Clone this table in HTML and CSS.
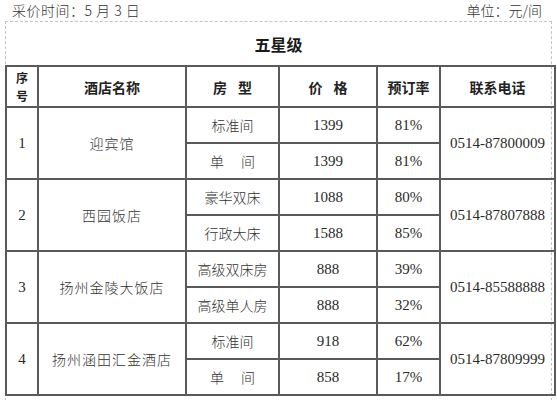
FILE: index.html
```html
<!DOCTYPE html>
<html lang="zh">
<head>
<meta charset="utf-8">
<link rel="stylesheet" href="styles.css">
</head>
<body>
<div class="topbar">
  <span class="date">采价时间：5 月 3 日</span>
  <span class="unit">单位：元/间</span>
</div>
<div class="box">
  <div class="title">五星级</div>
  <table class="grid">
    <colgroup>
      <col class="c1"><col class="c2"><col class="c3"><col class="c4"><col class="c5"><col class="c6">
    </colgroup>
    <thead>
      <tr class="head">
        <th class="idx"><span class="ch">序</span><span class="ch">号</span></th>
        <th>酒店名称</th>
        <th class="spaced">房&nbsp;型</th>
        <th class="spaced">价&nbsp;格</th>
        <th>预订率</th>
        <th>联系电话</th>
      </tr>
    </thead>
    <tbody>
      <tr class="top">
        <td rowspan="2" class="num">1</td>
        <td rowspan="2" class="name">迎宾馆</td>
        <td class="room">标准间</td>
        <td class="num">1399</td>
        <td class="num">81%</td>
        <td rowspan="2" class="num">0514-87800009</td>
      </tr>
      <tr class="sub">
        <td class="room">单　&nbsp;间</td>
        <td class="num">1399</td>
        <td class="num">81%</td>
      </tr>
      <tr class="top">
        <td rowspan="2" class="num">2</td>
        <td rowspan="2" class="name">西园饭店</td>
        <td class="room">豪华双床</td>
        <td class="num">1088</td>
        <td class="num">80%</td>
        <td rowspan="2" class="num">0514-87807888</td>
      </tr>
      <tr class="sub">
        <td class="room">行政大床</td>
        <td class="num">1588</td>
        <td class="num">85%</td>
      </tr>
      <tr class="top">
        <td rowspan="2" class="num">3</td>
        <td rowspan="2" class="name">扬州金陵大饭店</td>
        <td class="room">高级双床房</td>
        <td class="num">888</td>
        <td class="num">39%</td>
        <td rowspan="2" class="num">0514-85588888</td>
      </tr>
      <tr class="sub">
        <td class="room">高级单人房</td>
        <td class="num">888</td>
        <td class="num">32%</td>
      </tr>
      <tr class="top">
        <td rowspan="2" class="num">4</td>
        <td rowspan="2" class="name">扬州涵田汇金酒店</td>
        <td class="room">标准间</td>
        <td class="num">918</td>
        <td class="num">62%</td>
        <td rowspan="2" class="num">0514-87809999</td>
      </tr>
      <tr class="sub">
        <td class="room">单　&nbsp;间</td>
        <td class="num">858</td>
        <td class="num">17%</td>
      </tr>
    </tbody>
  </table>
</div>
</body>
</html>
```

FILE: styles.css
```css
html, body {
  margin: 0;
  padding: 0;
  background: #ffffff;
}
body {
  width: 557px;
  height: 400px;
  overflow: hidden;
  font-family: "Liberation Serif", "Noto Sans CJK SC", serif;
  color: #222;
}
.topbar {
  display: flex;
  justify-content: space-between;
  align-items: center;
  height: 21px;
  padding: 0 15px 0 12px;
  font-family: "Noto Sans CJK SC", sans-serif;
  font-size: 14px;
  font-weight: 300;
  color: #333;
  line-height: 21px;
}
.date {
  letter-spacing: 0.5px;
}
.box {
  margin: 0 5px;
  border: 1px dashed #c4c4c4;
  height: 380px;
  box-sizing: border-box;
}
.title {
  height: 43px;
  display: flex;
  align-items: center;
  justify-content: center;
  font-family: "Noto Sans CJK SC", sans-serif;
  font-weight: bold;
  font-size: 16px;
  color: #1a1a1a;
}
.grid {
  border-collapse: collapse;
  table-layout: fixed;
  width: 549px;
  margin-left: -1px;
}
.c1 { width: 32px; }
.c2 { width: 148px; }
.c3 { width: 93px; }
.c4 { width: 98px; }
.c5 { width: 63px; }
.c6 { width: 115px; }
.grid th, .grid td {
  border: 2px solid #5a5a5a;
  text-align: center;
  vertical-align: middle;
  padding: 0;
}
.grid th {
  height: 39px;
  font-family: "Noto Sans CJK SC", sans-serif;
  font-weight: bold;
  font-size: 14px;
  color: #222;
  line-height: 18px;
}
.grid th.spaced {
  letter-spacing: 4px;
  text-indent: 4px;
}
.grid th.idx {
  font-size: 12px;
  line-height: 18px;
}
.ch {
  display: block;
  height: 18px;
  line-height: 18px;
}
.grid td {
  height: 34px;
  font-size: 14px;
  color: #2a2a2a;
}
.grid td.room, .grid td.name {
  font-family: "Noto Sans CJK SC", sans-serif;
  font-weight: 300;
  font-size: 14px;
  color: #333;
}
.grid td.name {
  letter-spacing: 1px;
}
.grid td.num {
  font-family: "Liberation Serif", serif;
  font-size: 15px;
}
.grid tr.top td.room,
.grid tr.top td.num {
  border-bottom: 1px solid #8a8a8a;
}
.grid tr.top td[rowspan] {
  border-bottom: 2px solid #5a5a5a;
}
```
